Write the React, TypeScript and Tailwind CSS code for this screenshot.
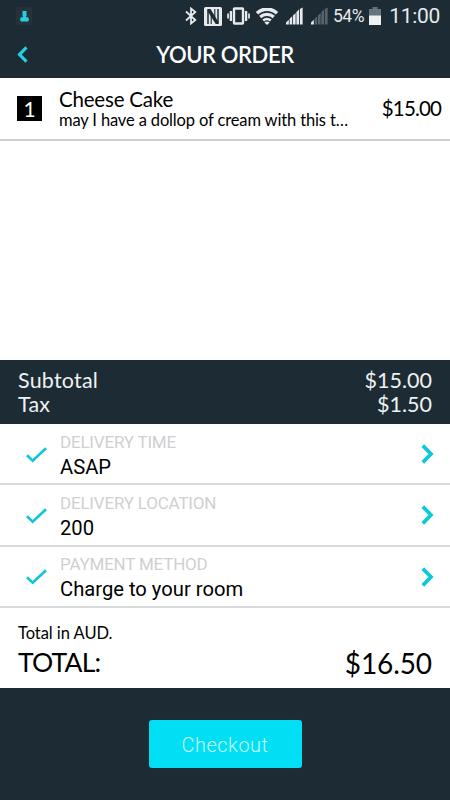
// Order review screen: status bar, cart lines, totals, delivery options and checkout.

type OrderLine = { qty: number; name: string; note: string; price: string };
type Option = { label: string; value: string };

const LINES: OrderLine[] = [
  { qty: 1, name: 'Cheese Cake', note: 'may I have a dollop of cream with this t…', price: '$15.00' },
];

const SUMMARY = [
  { label: 'Subtotal', amount: '$15.00' },
  { label: 'Tax', amount: '$1.50' },
];

const OPTIONS: Option[] = [
  { label: 'DELIVERY TIME', value: 'ASAP' },
  { label: 'DELIVERY LOCATION', value: '200' },
  { label: 'PAYMENT METHOD', value: 'Charge to your room' },
];

function BluetoothIcon() {
  return (
    <svg width="12" height="18" viewBox="0 0 12 18" fill="none" stroke="#e6eaec" strokeWidth="1.8">
      <path d="M1 4.5 10.3 13 6 16.5V1.5L10.3 5 1 13.5" />
    </svg>
  );
}

function NfcIcon() {
  return (
    <svg width="18" height="19" viewBox="0 0 18 19">
      <rect width="18" height="19" rx="1.5" fill="#e6eaec" />
      <path d="M4 17V3.5M14 15.5V2" fill="none" stroke="#1d2c34" strokeWidth="1.5" />
      <path d="M7.2 17V7.5M10.8 11.5V2" fill="none" stroke="#1d2c34" strokeWidth="1.1" />
      <path d="M3.3 2h3.2l8.2 13.5V17h-3L3.3 3.8z" fill="#1d2c34" />
    </svg>
  );
}

function VibrateIcon() {
  return (
    <svg width="23" height="18" viewBox="0 0 23 18" fill="none" stroke="#e6eaec">
      <rect x="7" y="1.5" width="9" height="15" rx="0.5" strokeWidth="2.4" />
      <path d="M3.9 4v10M19.1 4v10" strokeWidth="2.3" />
      <path d="M1 6.5v5M22 6.5v5" strokeWidth="1.7" />
    </svg>
  );
}

function WifiIcon() {
  return (
    <svg width="22" height="17" viewBox="0 0 22 17" fill="none" stroke="#e6eaec">
      <path d="M1 5.2a14.5 14.5 0 0 1 20 0" strokeWidth="3.6" />
      <path d="M4.2 9a10 10 0 0 1 13.6 0" strokeWidth="3.1" />
      <path d="M7.2 12.4a5.8 5.8 0 0 1 7.6 0" strokeWidth="2.7" />
      <path d="M11 17 8.4 14.6a3.5 3.5 0 0 1 5.2 0z" fill="#e6eaec" stroke="none" />
    </svg>
  );
}

function SignalIcon({ weak = false }: { weak?: boolean }) {
  const rest = weak ? '#56636b' : '#e6eaec';
  return (
    <svg width="17" height="18" viewBox="0 0 18 18">
      <path d="M0 18v-2l3-3v5z" fill="#e6eaec" />
      <path d="M3.8 18v-6l2.8-2.7V18zM7.4 18V8.4l2.8-2.7V18zM11 18V4.8L13.8 2v16zM14.7 18V1.5L17.6 0v18z" fill={rest} />
    </svg>
  );
}

function BatteryIcon() {
  return (
    <svg width="12" height="18" viewBox="0 0 12 18">
      <path d="M3.5 0h5v2H12v7H0V2h3.5z" fill="#69757c" />
      <path d="M0 8.5h12V18H0z" fill="#eef1f2" />
    </svg>
  );
}

function StatusBar() {
  return (
    <div className="flex h-8 items-center pr-[10px] font-['Roboto',sans-serif] text-[#e6eaec]">
      <div className="ml-4 flex h-[18px] w-4 items-center justify-center bg-[#263139]">
        <svg width="9" height="11" viewBox="0 0 9 11" fill="#24cfe0">
          <path d="M2.5 0h4v5L5.7 6.2H8.2L9 9 8 10.5H1L0 9l.8-2.8h2.5L2.5 5z" />
        </svg>
      </div>
      <div className="ml-[153px] flex items-center">
        <BluetoothIcon />
        <span className="ml-[7px]"><NfcIcon /></span>
        <span className="ml-[5px]"><VibrateIcon /></span>
        <span className="ml-[6px]"><WifiIcon /></span>
        <span className="ml-[8px]"><SignalIcon /></span>
        <span className="ml-[8px]"><SignalIcon weak /></span>
      </div>
      <span className="ml-[5px] w-[33px] text-[17.5px] tracking-[-0.5px]">54%</span>
      <span className="ml-[3px]"><BatteryIcon /></span>
      <span className="ml-auto text-[21px] leading-none tracking-[-0.3px]">11:00</span>
    </div>
  );
}

function Chevron({ flip = false }: { flip?: boolean }) {
  return (
    <svg
      width="13" height="20" viewBox="0 0 13 20" fill="none" strokeWidth="3.7"
      stroke={flip ? '#1fd3e6' : '#0bc8da'}
      className={flip ? 'h-[17px] w-[11px] -scale-x-100' : 'mt-px'}
    >
      <path d="M1.8 1.6 10 10 1.8 18.4" />
    </svg>
  );
}

function OptionRow({ option }: { option: Option }) {
  return (
    <button className="flex h-[61.3px] w-full items-center border-b-2 border-[#d8d9db] pl-[26px] pr-4 text-left font-['Roboto',sans-serif]">
      <svg width="21" height="16" viewBox="0 0 21 16" fill="none" stroke="#12c6d6" strokeWidth="2.7" className="mt-[2px]">
        <path d="M1 8.3 6.7 13.7 20 1.2" />
      </svg>
      <span className="ml-[13px] mt-[2px] flex-1">
        <span className="block text-[17px] leading-6 tracking-[-0.2px] text-[#cfcfd2]">{option.label}</span>
        <span className="block text-[20.2px] leading-[26px] text-black">{option.value}</span>
      </span>
      <Chevron />
    </button>
  );
}

export default function App() {
  return (
    <div className="flex h-[800px] w-[450px] flex-col overflow-hidden bg-white font-['Lato',sans-serif] text-black">
      <header className="h-[78px] shrink-0 bg-[#1d2c34]">
        <StatusBar />
        <div className="grid h-[44px] grid-cols-[60px_1fr_60px] items-center">
          <button className="pl-[17px]" aria-label="Back"><Chevron flip /></button>
          <h1 className="text-center text-[22px] font-semibold tracking-[-0.4px] text-white">YOUR ORDER</h1>
        </div>
      </header>

      <main className="h-[282px] shrink-0">
        {LINES.map((line) => (
          <div key={line.name} className="flex h-[63px] items-center border-b-2 border-[#cdcdcd] pl-[17px] pr-[9px]">
            <span className="flex size-[25px] items-center justify-center bg-black text-[21px] text-white">{line.qty}</span>
            <div className="ml-[17px] flex-1 pt-px">
              <div className="text-[20.5px] leading-[22px] tracking-[-0.2px]">{line.name}</div>
              <div className="text-[16.5px] leading-[20px] tracking-[-0.14px] whitespace-nowrap">{line.note}</div>
            </div>
            <span className="text-[20.5px] tracking-[-0.85px]">{line.price}</span>
          </div>
        ))}
      </main>

      <section className="h-16 shrink-0 bg-[#1d2c34] px-[18px] pt-2 text-[21.5px] leading-6 text-[#eef1f2]">
        {SUMMARY.map((row) => (
          <div key={row.label} className="flex justify-between">
            <span className="tracking-[0.2px]">{row.label}</span>
            <span>{row.amount}</span>
          </div>
        ))}
      </section>

      <section className="shrink-0">
        {OPTIONS.map((option) => <OptionRow key={option.label} option={option} />)}
      </section>

      <section className="flex-1 px-[18px] pt-[15px]">
        <div className="text-[16.5px] leading-5 tracking-[-0.05px]">Total in AUD.</div>
        <div className="flex items-center justify-between text-[26.5px] leading-[39px]">
          <span className="tracking-[-0.8px]">TOTAL:</span>
          <span className="mt-px text-[28px] tracking-[-0.1px]">$16.50</span>
        </div>
      </section>

      <footer className="flex h-28 shrink-0 items-center justify-center bg-[#1d2c34]">
        <button className="h-12 w-[153px] rounded-[3px] bg-[#00dff3] pt-px font-['Roboto',sans-serif] text-[20px] font-light tracking-[0.5px] text-[#c9fbff]">
          Checkout
        </button>
      </footer>
    </div>
  );
}
